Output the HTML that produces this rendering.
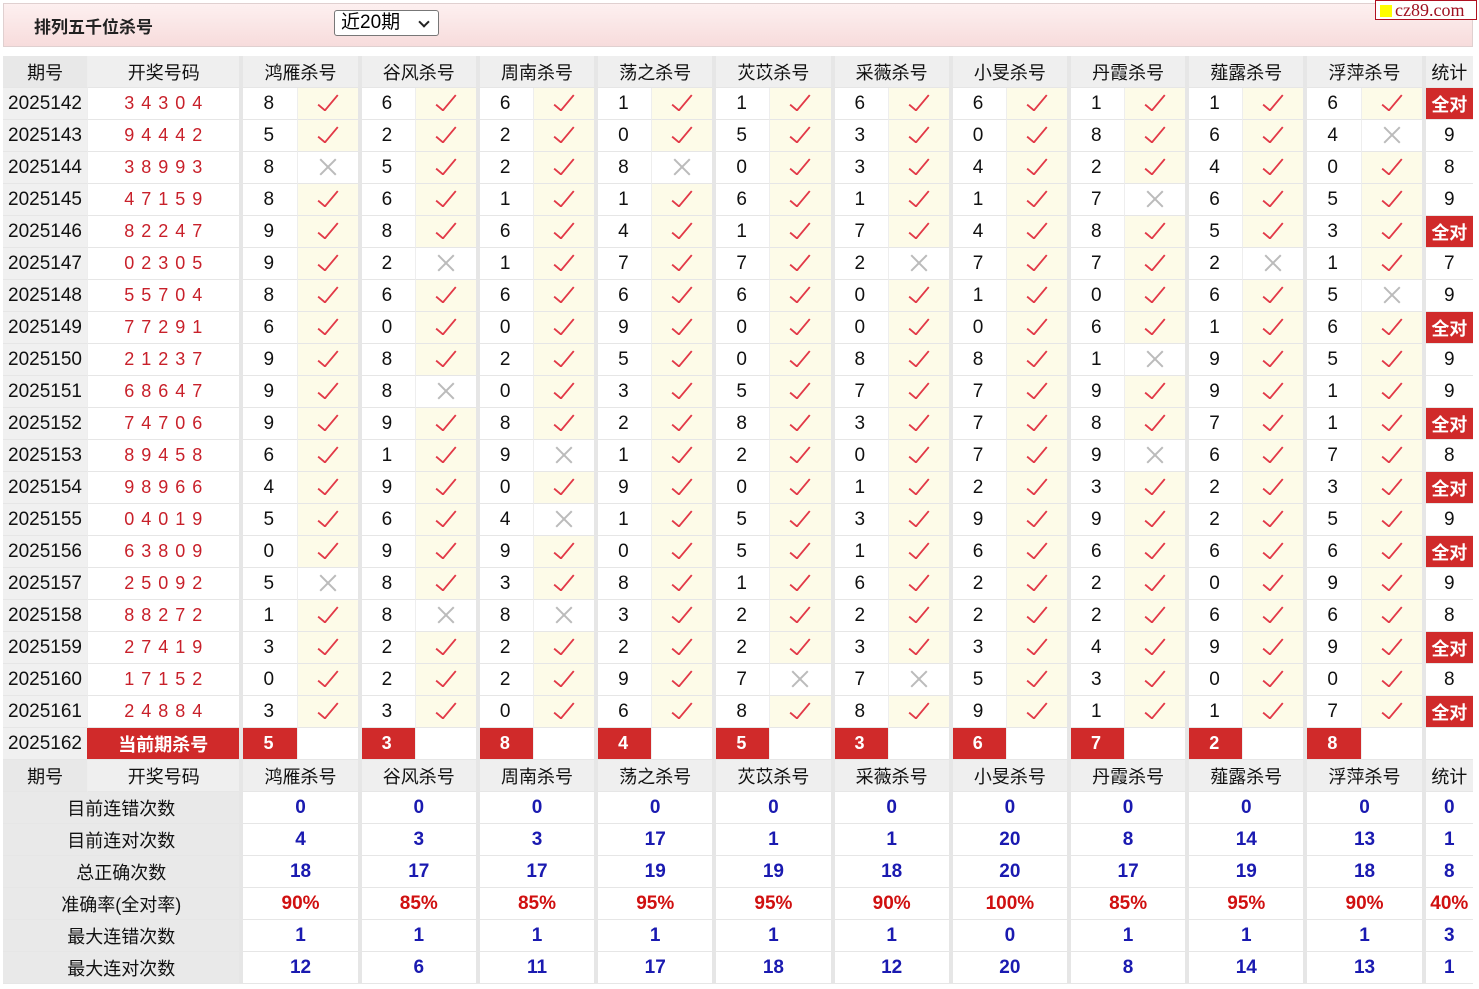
<!DOCTYPE html>
<html><head><meta charset="utf-8">
<style>
body{margin:0;background:#fff;font-family:"Liberation Sans","Noto Sans CJK SC",sans-serif;width:1479px;height:989px;overflow:hidden;position:relative}
.bar{position:absolute;left:3px;top:3px;width:1468px;height:42px;border:1px solid #e0d0d0;background:linear-gradient(#fdf0f0,#f7dcdc)}
.bar b{position:absolute;left:30px;top:9px;font-size:17px;color:#222}
.sel{position:absolute;left:330px;top:6px;border:1px solid #777;border-radius:3px;background:#fff;font-size:19px;line-height:24px;padding-left:6px;box-sizing:border-box;width:105px;height:26px}
.sel:after{content:"";position:absolute;right:10px;top:7px;width:6px;height:6px;border-right:2px solid #222;border-bottom:2px solid #222;transform:rotate(45deg)}
.logo{position:absolute;left:1375px;top:0;width:100px;height:18px;border:1px solid #b01020;background:#fff;font-family:"Liberation Serif",serif;font-size:18px;color:#a01020;line-height:18px;white-space:nowrap;overflow:hidden}
.logo i{display:inline-block;width:12px;height:12px;background:#ff0;margin:0 3px 0 4px;vertical-align:-1px}
table{position:absolute;left:3px;top:56px;border-spacing:0;table-layout:fixed;width:1470px}
td{height:31px;padding:0;border-bottom:1px solid #e6e6e6;text-align:center;font-size:19px;color:#111;white-space:nowrap;overflow:hidden}
td.p{background:#f0f0f0;text-align:left;padding-left:5px}
td.n{border-left:4px solid #e6e6e6;text-align:left;padding-left:20px}
td.y{background:#fdfbe8;border-left:1px solid #eee}
td.w{border-left:1px solid #eee}
td.d{color:#c8202a;letter-spacing:7px;border-left:1px solid #eee;font-size:18px;padding-left:6px}
td.s{border-left:4px solid #e6e6e6}
td.a{border-left:4px solid #e6e6e6;background:#d02a2a;color:#fff;font-weight:bold;font-size:18px}
tr.h td{background:#efefef;font-size:18px}
tr.h td.p{text-align:center;padding-left:0;background:#e8e8e8}
td.r{background:#d02a2a;color:#fff;font-weight:bold;font-size:18px}
td.rn{border-left:4px solid #e6e6e6;background:#d02a2a;color:#fff;font-weight:bold;text-align:left;padding-left:20px;font-size:18px}
td.L{background:#e9e9e9;font-size:18px}
td.v{border-left:4px solid #e6e6e6;color:#1a1ab0;font-weight:bold}
td.q{border-left:4px solid #e6e6e6;color:#d01010;font-weight:bold}
.c{display:inline-block;width:8px;height:19px;border-right:2.5px solid #e23a48;border-bottom:2.5px solid #e23a48;border-bottom-right-radius:2px;transform:rotate(40deg);margin-top:-6px;vertical-align:middle}
.x{display:inline-block;position:relative;width:20px;height:20px;vertical-align:middle}
.x:before,.x:after{content:"";position:absolute;left:-1px;top:9px;width:22px;height:2px;background:#bbb;transform:rotate(45deg)}
.x:after{transform:rotate(-45deg)}
</style></head><body>
<div class="bar"><b>排列五千位杀号</b><div class="sel">近20期</div></div>
<div class="logo"><i></i>cz89.com</div>
<table>
<colgroup><col style="width:84px"><col style="width:152px"><col style="width:57px"><col style="width:61px"><col style="width:57px"><col style="width:61px"><col style="width:57px"><col style="width:61px"><col style="width:57px"><col style="width:61px"><col style="width:57px"><col style="width:61px"><col style="width:57px"><col style="width:61px"><col style="width:57px"><col style="width:61px"><col style="width:57px"><col style="width:61px"><col style="width:57px"><col style="width:61px"><col style="width:57px"><col style="width:61px"><col style="width:51px"></colgroup>
<tr class="h"><td class="p">期号</td><td class="w">开奖号码</td><td class="s" colspan="2">鸿雁杀号</td><td class="s" colspan="2">谷风杀号</td><td class="s" colspan="2">周南杀号</td><td class="s" colspan="2">荡之杀号</td><td class="s" colspan="2">苂苡杀号</td><td class="s" colspan="2">采薇杀号</td><td class="s" colspan="2">小旻杀号</td><td class="s" colspan="2">丹霞杀号</td><td class="s" colspan="2">薤露杀号</td><td class="s" colspan="2">浮萍杀号</td><td class="s">统计</td></tr>
<tr><td class="p">2025142</td><td class="d">34304</td><td class="n">8</td><td class="y"><i class="c"></i></td><td class="n">6</td><td class="y"><i class="c"></i></td><td class="n">6</td><td class="y"><i class="c"></i></td><td class="n">1</td><td class="y"><i class="c"></i></td><td class="n">1</td><td class="y"><i class="c"></i></td><td class="n">6</td><td class="y"><i class="c"></i></td><td class="n">6</td><td class="y"><i class="c"></i></td><td class="n">1</td><td class="y"><i class="c"></i></td><td class="n">1</td><td class="y"><i class="c"></i></td><td class="n">6</td><td class="y"><i class="c"></i></td><td class="a">全对</td></tr>
<tr><td class="p">2025143</td><td class="d">94442</td><td class="n">5</td><td class="y"><i class="c"></i></td><td class="n">2</td><td class="y"><i class="c"></i></td><td class="n">2</td><td class="y"><i class="c"></i></td><td class="n">0</td><td class="y"><i class="c"></i></td><td class="n">5</td><td class="y"><i class="c"></i></td><td class="n">3</td><td class="y"><i class="c"></i></td><td class="n">0</td><td class="y"><i class="c"></i></td><td class="n">8</td><td class="y"><i class="c"></i></td><td class="n">6</td><td class="y"><i class="c"></i></td><td class="n">4</td><td class="w"><i class="x"></i></td><td class="s">9</td></tr>
<tr><td class="p">2025144</td><td class="d">38993</td><td class="n">8</td><td class="w"><i class="x"></i></td><td class="n">5</td><td class="y"><i class="c"></i></td><td class="n">2</td><td class="y"><i class="c"></i></td><td class="n">8</td><td class="w"><i class="x"></i></td><td class="n">0</td><td class="y"><i class="c"></i></td><td class="n">3</td><td class="y"><i class="c"></i></td><td class="n">4</td><td class="y"><i class="c"></i></td><td class="n">2</td><td class="y"><i class="c"></i></td><td class="n">4</td><td class="y"><i class="c"></i></td><td class="n">0</td><td class="y"><i class="c"></i></td><td class="s">8</td></tr>
<tr><td class="p">2025145</td><td class="d">47159</td><td class="n">8</td><td class="y"><i class="c"></i></td><td class="n">6</td><td class="y"><i class="c"></i></td><td class="n">1</td><td class="y"><i class="c"></i></td><td class="n">1</td><td class="y"><i class="c"></i></td><td class="n">6</td><td class="y"><i class="c"></i></td><td class="n">1</td><td class="y"><i class="c"></i></td><td class="n">1</td><td class="y"><i class="c"></i></td><td class="n">7</td><td class="w"><i class="x"></i></td><td class="n">6</td><td class="y"><i class="c"></i></td><td class="n">5</td><td class="y"><i class="c"></i></td><td class="s">9</td></tr>
<tr><td class="p">2025146</td><td class="d">82247</td><td class="n">9</td><td class="y"><i class="c"></i></td><td class="n">8</td><td class="y"><i class="c"></i></td><td class="n">6</td><td class="y"><i class="c"></i></td><td class="n">4</td><td class="y"><i class="c"></i></td><td class="n">1</td><td class="y"><i class="c"></i></td><td class="n">7</td><td class="y"><i class="c"></i></td><td class="n">4</td><td class="y"><i class="c"></i></td><td class="n">8</td><td class="y"><i class="c"></i></td><td class="n">5</td><td class="y"><i class="c"></i></td><td class="n">3</td><td class="y"><i class="c"></i></td><td class="a">全对</td></tr>
<tr><td class="p">2025147</td><td class="d">02305</td><td class="n">9</td><td class="y"><i class="c"></i></td><td class="n">2</td><td class="w"><i class="x"></i></td><td class="n">1</td><td class="y"><i class="c"></i></td><td class="n">7</td><td class="y"><i class="c"></i></td><td class="n">7</td><td class="y"><i class="c"></i></td><td class="n">2</td><td class="w"><i class="x"></i></td><td class="n">7</td><td class="y"><i class="c"></i></td><td class="n">7</td><td class="y"><i class="c"></i></td><td class="n">2</td><td class="w"><i class="x"></i></td><td class="n">1</td><td class="y"><i class="c"></i></td><td class="s">7</td></tr>
<tr><td class="p">2025148</td><td class="d">55704</td><td class="n">8</td><td class="y"><i class="c"></i></td><td class="n">6</td><td class="y"><i class="c"></i></td><td class="n">6</td><td class="y"><i class="c"></i></td><td class="n">6</td><td class="y"><i class="c"></i></td><td class="n">6</td><td class="y"><i class="c"></i></td><td class="n">0</td><td class="y"><i class="c"></i></td><td class="n">1</td><td class="y"><i class="c"></i></td><td class="n">0</td><td class="y"><i class="c"></i></td><td class="n">6</td><td class="y"><i class="c"></i></td><td class="n">5</td><td class="w"><i class="x"></i></td><td class="s">9</td></tr>
<tr><td class="p">2025149</td><td class="d">77291</td><td class="n">6</td><td class="y"><i class="c"></i></td><td class="n">0</td><td class="y"><i class="c"></i></td><td class="n">0</td><td class="y"><i class="c"></i></td><td class="n">9</td><td class="y"><i class="c"></i></td><td class="n">0</td><td class="y"><i class="c"></i></td><td class="n">0</td><td class="y"><i class="c"></i></td><td class="n">0</td><td class="y"><i class="c"></i></td><td class="n">6</td><td class="y"><i class="c"></i></td><td class="n">1</td><td class="y"><i class="c"></i></td><td class="n">6</td><td class="y"><i class="c"></i></td><td class="a">全对</td></tr>
<tr><td class="p">2025150</td><td class="d">21237</td><td class="n">9</td><td class="y"><i class="c"></i></td><td class="n">8</td><td class="y"><i class="c"></i></td><td class="n">2</td><td class="y"><i class="c"></i></td><td class="n">5</td><td class="y"><i class="c"></i></td><td class="n">0</td><td class="y"><i class="c"></i></td><td class="n">8</td><td class="y"><i class="c"></i></td><td class="n">8</td><td class="y"><i class="c"></i></td><td class="n">1</td><td class="w"><i class="x"></i></td><td class="n">9</td><td class="y"><i class="c"></i></td><td class="n">5</td><td class="y"><i class="c"></i></td><td class="s">9</td></tr>
<tr><td class="p">2025151</td><td class="d">68647</td><td class="n">9</td><td class="y"><i class="c"></i></td><td class="n">8</td><td class="w"><i class="x"></i></td><td class="n">0</td><td class="y"><i class="c"></i></td><td class="n">3</td><td class="y"><i class="c"></i></td><td class="n">5</td><td class="y"><i class="c"></i></td><td class="n">7</td><td class="y"><i class="c"></i></td><td class="n">7</td><td class="y"><i class="c"></i></td><td class="n">9</td><td class="y"><i class="c"></i></td><td class="n">9</td><td class="y"><i class="c"></i></td><td class="n">1</td><td class="y"><i class="c"></i></td><td class="s">9</td></tr>
<tr><td class="p">2025152</td><td class="d">74706</td><td class="n">9</td><td class="y"><i class="c"></i></td><td class="n">9</td><td class="y"><i class="c"></i></td><td class="n">8</td><td class="y"><i class="c"></i></td><td class="n">2</td><td class="y"><i class="c"></i></td><td class="n">8</td><td class="y"><i class="c"></i></td><td class="n">3</td><td class="y"><i class="c"></i></td><td class="n">7</td><td class="y"><i class="c"></i></td><td class="n">8</td><td class="y"><i class="c"></i></td><td class="n">7</td><td class="y"><i class="c"></i></td><td class="n">1</td><td class="y"><i class="c"></i></td><td class="a">全对</td></tr>
<tr><td class="p">2025153</td><td class="d">89458</td><td class="n">6</td><td class="y"><i class="c"></i></td><td class="n">1</td><td class="y"><i class="c"></i></td><td class="n">9</td><td class="w"><i class="x"></i></td><td class="n">1</td><td class="y"><i class="c"></i></td><td class="n">2</td><td class="y"><i class="c"></i></td><td class="n">0</td><td class="y"><i class="c"></i></td><td class="n">7</td><td class="y"><i class="c"></i></td><td class="n">9</td><td class="w"><i class="x"></i></td><td class="n">6</td><td class="y"><i class="c"></i></td><td class="n">7</td><td class="y"><i class="c"></i></td><td class="s">8</td></tr>
<tr><td class="p">2025154</td><td class="d">98966</td><td class="n">4</td><td class="y"><i class="c"></i></td><td class="n">9</td><td class="y"><i class="c"></i></td><td class="n">0</td><td class="y"><i class="c"></i></td><td class="n">9</td><td class="y"><i class="c"></i></td><td class="n">0</td><td class="y"><i class="c"></i></td><td class="n">1</td><td class="y"><i class="c"></i></td><td class="n">2</td><td class="y"><i class="c"></i></td><td class="n">3</td><td class="y"><i class="c"></i></td><td class="n">2</td><td class="y"><i class="c"></i></td><td class="n">3</td><td class="y"><i class="c"></i></td><td class="a">全对</td></tr>
<tr><td class="p">2025155</td><td class="d">04019</td><td class="n">5</td><td class="y"><i class="c"></i></td><td class="n">6</td><td class="y"><i class="c"></i></td><td class="n">4</td><td class="w"><i class="x"></i></td><td class="n">1</td><td class="y"><i class="c"></i></td><td class="n">5</td><td class="y"><i class="c"></i></td><td class="n">3</td><td class="y"><i class="c"></i></td><td class="n">9</td><td class="y"><i class="c"></i></td><td class="n">9</td><td class="y"><i class="c"></i></td><td class="n">2</td><td class="y"><i class="c"></i></td><td class="n">5</td><td class="y"><i class="c"></i></td><td class="s">9</td></tr>
<tr><td class="p">2025156</td><td class="d">63809</td><td class="n">0</td><td class="y"><i class="c"></i></td><td class="n">9</td><td class="y"><i class="c"></i></td><td class="n">9</td><td class="y"><i class="c"></i></td><td class="n">0</td><td class="y"><i class="c"></i></td><td class="n">5</td><td class="y"><i class="c"></i></td><td class="n">1</td><td class="y"><i class="c"></i></td><td class="n">6</td><td class="y"><i class="c"></i></td><td class="n">6</td><td class="y"><i class="c"></i></td><td class="n">6</td><td class="y"><i class="c"></i></td><td class="n">6</td><td class="y"><i class="c"></i></td><td class="a">全对</td></tr>
<tr><td class="p">2025157</td><td class="d">25092</td><td class="n">5</td><td class="w"><i class="x"></i></td><td class="n">8</td><td class="y"><i class="c"></i></td><td class="n">3</td><td class="y"><i class="c"></i></td><td class="n">8</td><td class="y"><i class="c"></i></td><td class="n">1</td><td class="y"><i class="c"></i></td><td class="n">6</td><td class="y"><i class="c"></i></td><td class="n">2</td><td class="y"><i class="c"></i></td><td class="n">2</td><td class="y"><i class="c"></i></td><td class="n">0</td><td class="y"><i class="c"></i></td><td class="n">9</td><td class="y"><i class="c"></i></td><td class="s">9</td></tr>
<tr><td class="p">2025158</td><td class="d">88272</td><td class="n">1</td><td class="y"><i class="c"></i></td><td class="n">8</td><td class="w"><i class="x"></i></td><td class="n">8</td><td class="w"><i class="x"></i></td><td class="n">3</td><td class="y"><i class="c"></i></td><td class="n">2</td><td class="y"><i class="c"></i></td><td class="n">2</td><td class="y"><i class="c"></i></td><td class="n">2</td><td class="y"><i class="c"></i></td><td class="n">2</td><td class="y"><i class="c"></i></td><td class="n">6</td><td class="y"><i class="c"></i></td><td class="n">6</td><td class="y"><i class="c"></i></td><td class="s">8</td></tr>
<tr><td class="p">2025159</td><td class="d">27419</td><td class="n">3</td><td class="y"><i class="c"></i></td><td class="n">2</td><td class="y"><i class="c"></i></td><td class="n">2</td><td class="y"><i class="c"></i></td><td class="n">2</td><td class="y"><i class="c"></i></td><td class="n">2</td><td class="y"><i class="c"></i></td><td class="n">3</td><td class="y"><i class="c"></i></td><td class="n">3</td><td class="y"><i class="c"></i></td><td class="n">4</td><td class="y"><i class="c"></i></td><td class="n">9</td><td class="y"><i class="c"></i></td><td class="n">9</td><td class="y"><i class="c"></i></td><td class="a">全对</td></tr>
<tr><td class="p">2025160</td><td class="d">17152</td><td class="n">0</td><td class="y"><i class="c"></i></td><td class="n">2</td><td class="y"><i class="c"></i></td><td class="n">2</td><td class="y"><i class="c"></i></td><td class="n">9</td><td class="y"><i class="c"></i></td><td class="n">7</td><td class="w"><i class="x"></i></td><td class="n">7</td><td class="w"><i class="x"></i></td><td class="n">5</td><td class="y"><i class="c"></i></td><td class="n">3</td><td class="y"><i class="c"></i></td><td class="n">0</td><td class="y"><i class="c"></i></td><td class="n">0</td><td class="y"><i class="c"></i></td><td class="s">8</td></tr>
<tr><td class="p">2025161</td><td class="d">24884</td><td class="n">3</td><td class="y"><i class="c"></i></td><td class="n">3</td><td class="y"><i class="c"></i></td><td class="n">0</td><td class="y"><i class="c"></i></td><td class="n">6</td><td class="y"><i class="c"></i></td><td class="n">8</td><td class="y"><i class="c"></i></td><td class="n">8</td><td class="y"><i class="c"></i></td><td class="n">9</td><td class="y"><i class="c"></i></td><td class="n">1</td><td class="y"><i class="c"></i></td><td class="n">1</td><td class="y"><i class="c"></i></td><td class="n">7</td><td class="y"><i class="c"></i></td><td class="a">全对</td></tr>
<tr><td class="p">2025162</td><td class="r">当前期杀号</td><td class="rn">5</td><td class="w"></td><td class="rn">3</td><td class="w"></td><td class="rn">8</td><td class="w"></td><td class="rn">4</td><td class="w"></td><td class="rn">5</td><td class="w"></td><td class="rn">3</td><td class="w"></td><td class="rn">6</td><td class="w"></td><td class="rn">7</td><td class="w"></td><td class="rn">2</td><td class="w"></td><td class="rn">8</td><td class="w"></td><td class="s"></td></tr>
<tr class="h"><td class="p">期号</td><td class="w">开奖号码</td><td class="s" colspan="2">鸿雁杀号</td><td class="s" colspan="2">谷风杀号</td><td class="s" colspan="2">周南杀号</td><td class="s" colspan="2">荡之杀号</td><td class="s" colspan="2">苂苡杀号</td><td class="s" colspan="2">采薇杀号</td><td class="s" colspan="2">小旻杀号</td><td class="s" colspan="2">丹霞杀号</td><td class="s" colspan="2">薤露杀号</td><td class="s" colspan="2">浮萍杀号</td><td class="s">统计</td></tr>
<tr><td class="L" colspan="2">目前连错次数</td><td class="v" colspan="2">0</td><td class="v" colspan="2">0</td><td class="v" colspan="2">0</td><td class="v" colspan="2">0</td><td class="v" colspan="2">0</td><td class="v" colspan="2">0</td><td class="v" colspan="2">0</td><td class="v" colspan="2">0</td><td class="v" colspan="2">0</td><td class="v" colspan="2">0</td><td class="v">0</td></tr>
<tr><td class="L" colspan="2">目前连对次数</td><td class="v" colspan="2">4</td><td class="v" colspan="2">3</td><td class="v" colspan="2">3</td><td class="v" colspan="2">17</td><td class="v" colspan="2">1</td><td class="v" colspan="2">1</td><td class="v" colspan="2">20</td><td class="v" colspan="2">8</td><td class="v" colspan="2">14</td><td class="v" colspan="2">13</td><td class="v">1</td></tr>
<tr><td class="L" colspan="2">总正确次数</td><td class="v" colspan="2">18</td><td class="v" colspan="2">17</td><td class="v" colspan="2">17</td><td class="v" colspan="2">19</td><td class="v" colspan="2">19</td><td class="v" colspan="2">18</td><td class="v" colspan="2">20</td><td class="v" colspan="2">17</td><td class="v" colspan="2">19</td><td class="v" colspan="2">18</td><td class="v">8</td></tr>
<tr><td class="L" colspan="2">准确率(全对率)</td><td class="q" colspan="2">90%</td><td class="q" colspan="2">85%</td><td class="q" colspan="2">85%</td><td class="q" colspan="2">95%</td><td class="q" colspan="2">95%</td><td class="q" colspan="2">90%</td><td class="q" colspan="2">100%</td><td class="q" colspan="2">85%</td><td class="q" colspan="2">95%</td><td class="q" colspan="2">90%</td><td class="q">40%</td></tr>
<tr><td class="L" colspan="2">最大连错次数</td><td class="v" colspan="2">1</td><td class="v" colspan="2">1</td><td class="v" colspan="2">1</td><td class="v" colspan="2">1</td><td class="v" colspan="2">1</td><td class="v" colspan="2">1</td><td class="v" colspan="2">0</td><td class="v" colspan="2">1</td><td class="v" colspan="2">1</td><td class="v" colspan="2">1</td><td class="v">3</td></tr>
<tr><td class="L" colspan="2">最大连对次数</td><td class="v" colspan="2">12</td><td class="v" colspan="2">6</td><td class="v" colspan="2">11</td><td class="v" colspan="2">17</td><td class="v" colspan="2">18</td><td class="v" colspan="2">12</td><td class="v" colspan="2">20</td><td class="v" colspan="2">8</td><td class="v" colspan="2">14</td><td class="v" colspan="2">13</td><td class="v">1</td></tr>
</table>
</body></html>
